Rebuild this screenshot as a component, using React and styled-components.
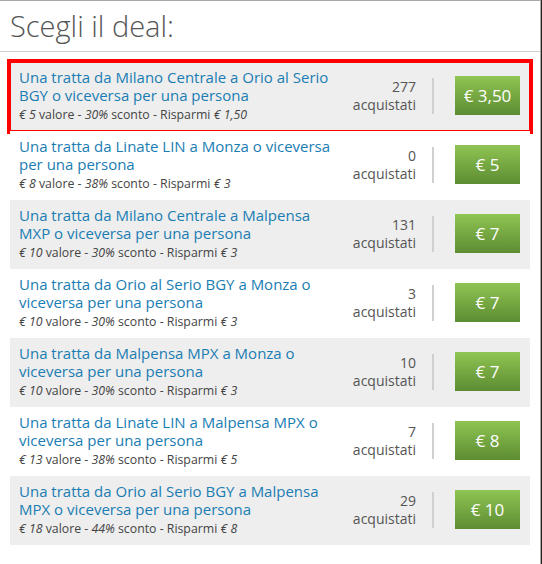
import React from 'react';
import styled, { createGlobalStyle } from 'styled-components';

const GlobalStyle = createGlobalStyle`
  html, body {
    margin: 0;
    padding: 0;
    background: #2a2622;
  }
  body {
    font-family: "Open Sans", "Liberation Sans", sans-serif;
  }
`;

const Modal = styled.div`
  box-sizing: border-box;
  width: 541px;
  min-height: 564px;
  background: #fff;
  border-top: 1px solid #a8a8a8;
  border-right: 1px solid #a8a8a8;
`;

const Title = styled.h2`
  margin: 0;
  height: 51px;
  box-sizing: border-box;
  padding: 5px 10px 0;
  font-size: 29px;
  font-weight: 300;
  line-height: 40px;
  color: #555;
  border-bottom: 1px solid #cfcfcf;
`;

const List = styled.div`
  padding: 10px 10px;
  display: flex;
  flex-direction: column;
`;

const Row = styled.div`
  display: flex;
  align-items: center;
  height: 69px;
  box-sizing: border-box;
  padding: 0 10px 2px 9px;
  background: ${p => (p.$odd ? '#eeeeee' : '#fff')};
  outline: ${p => (p.$selected ? '4px solid #ff0000' : 'none')};
  outline-offset: -1px;
`;

const Info = styled.div`
  flex: 1;
  min-width: 0;
`;

const DealLink = styled.a`
  display: block;
  font-size: 15px;
  line-height: 18px;
  color: #1a7db3;
  text-decoration: none;
  max-width: 320px;
  cursor: pointer;
`;

const Meta = styled.div`
  margin-top: 2px;
  font-size: 12.3px;
  line-height: 17px;
  color: #444;

  em {
    font-style: italic;
  }
`;

const Count = styled.div`
  text-align: right;
  font-size: 14px;
  line-height: 18px;
  color: #555;
  padding-right: 16px;
  border-right: 2px solid #d0d0d0;
  margin-right: 21px;
`;

const BuyButton = styled.button`
  width: 65px;
  height: 39px;
  border: none;
  border-radius: 0;
  padding: 0;
  background: linear-gradient(to bottom, #8fc553 0%, #76a842 50%, #5d8c33 100%);
  color: #fff;
  font-family: inherit;
  font-size: 17px;
  cursor: pointer;
`;

const deals = [
  { title: 'Una tratta da Milano Centrale a Orio al Serio BGY o viceversa per una persona', value: '5', off: '30%', save: '1,50', sold: 277, price: '3,50' },
  { title: 'Una tratta da Linate LIN a Monza o viceversa per una persona', value: '8', off: '38%', save: '3', sold: 0, price: '5' },
  { title: 'Una tratta da Milano Centrale a Malpensa MXP o viceversa per una persona', value: '10', off: '30%', save: '3', sold: 131, price: '7' },
  { title: 'Una tratta da Orio al Serio BGY a Monza o viceversa per una persona', value: '10', off: '30%', save: '3', sold: 3, price: '7' },
  { title: 'Una tratta da Malpensa MPX a Monza o viceversa per una persona', value: '10', off: '30%', save: '3', sold: 10, price: '7' },
  { title: 'Una tratta da Linate LIN a Malpensa MPX o viceversa per una persona', value: '13', off: '38%', save: '5', sold: 7, price: '8' },
  { title: 'Una tratta da Orio al Serio BGY a Malpensa MPX o viceversa per una persona', value: '18', off: '44%', save: '8', sold: 29, price: '10' },
];

export default function App() {
  return (
    <>
      <GlobalStyle />
      <Modal>
        <Title>Scegli il deal:</Title>
        <List>
          {deals.map((d, i) => (
            <Row key={i} $odd={i % 2 === 0} $selected={i === 0}>
              <Info>
                <DealLink>{d.title}</DealLink>
                <Meta>
                  <em>€ {d.value}</em> valore - <em>{d.off}</em> sconto - Risparmi <em>€ {d.save}</em>
                </Meta>
              </Info>
              <Count>
                {d.sold}
                <br />
                acquistati
              </Count>
              <BuyButton>€ {d.price}</BuyButton>
            </Row>
          ))}
        </List>
      </Modal>
    </>
  );
}
